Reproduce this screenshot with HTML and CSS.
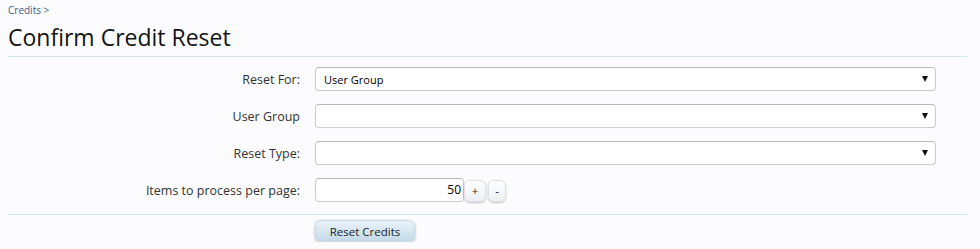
FILE: index.html
```html
<!DOCTYPE html>
<html>
<head>
<meta charset="utf-8">
<link rel="stylesheet" href="styles.css">
</head>
<body>
<div class="page">
  <div class="breadcrumb"><a href="#">Credits</a> &gt;</div>
  <h1 class="title">Confirm Credit Reset</h1>
  <form class="form">
    <div class="row">
      <label class="label">Reset For:</label>
      <div class="ctrl">
        <div class="select"><span class="val">User Group</span><span class="arrow"></span></div>
      </div>
    </div>
    <div class="row">
      <label class="label">User Group</label>
      <div class="ctrl">
        <div class="select"><span class="val"></span><span class="arrow"></span></div>
      </div>
    </div>
    <div class="row">
      <label class="label">Reset Type:</label>
      <div class="ctrl">
        <div class="select"><span class="val"></span><span class="arrow"></span></div>
      </div>
    </div>
    <div class="row">
      <label class="label">Items to process per page:</label>
      <div class="ctrl spin">
        <div class="num">50</div>
        <button type="button" class="spinbtn">+</button>
        <button type="button" class="spinbtn">-</button>
      </div>
    </div>
    <div class="submit">
      <div class="label"></div>
      <div class="ctrl"><button type="button" class="primary">Reset Credits</button></div>
    </div>
  </form>
</div>
</body>
</html>
```

FILE: styles.css
```css
html, body {
  margin: 0;
  padding: 0;
  background: #fcfcfe;
}
body {
  font-family: "Open Sans", "Noto Sans", sans-serif;
  color: #222;
}
.page {
  padding: 3px 13px 0 8px;
}
.breadcrumb {
  font-size: 10px;
  color: #41607e;
  height: 15px;
  line-height: 15px;
}
.breadcrumb a {
  color: #41607e;
  text-decoration: none;
}
.title {
  margin: 0;
  font-weight: normal;
  font-size: 23px;
  line-height: 30px;
  height: 39px;
  color: #141414;
  border-bottom: 1px solid #d3e6ee;
  box-sizing: border-box;
  padding-top: 4px;
}
.form {
  padding-top: 10px;
}
.row {
  display: flex;
  align-items: center;
  height: 24px;
  margin-bottom: 13px;
}
.label {
  width: 292px;
  flex: none;
  text-align: right;
  font-size: 12.5px;
  color: #333;
  padding-right: 15px;
}
.ctrl {
  flex: 1;
  padding-right: 31px;
  display: flex;
}
.select {
  flex: 1;
  height: 24px;
  box-sizing: border-box;
  border: 1px solid #cbcbcb;
  border-top-color: #b8b8b8;
  border-radius: 4px;
  background: #fff;
  display: flex;
  align-items: center;
  padding: 0 7px 0 8px;
  font-size: 11px;
  color: #000;
}
.val {
  flex: 1;
}
.arrow {
  width: 0;
  height: 0;
  border-left: 3.5px solid transparent;
  border-right: 3.5px solid transparent;
  border-top: 6px solid #111;
}
.spin {
  align-items: center;
}
.num {
  width: 149px;
  height: 24px;
  box-sizing: border-box;
  border: 1px solid #cbcbcb;
  border-top-color: #b8b8b8;
  border-radius: 4px;
  background: #fff;
  text-align: right;
  font-size: 12px;
  line-height: 22px;
  padding-right: 2px;
  color: #000;
}
.spinbtn {
  height: 22px;
  min-width: 22px;
  margin-left: 0;
  border: 1px solid #e0e0e6;
  border-radius: 6px;
  background: linear-gradient(#fff, #eceff3);
  box-shadow: 0 1px 2px rgba(0,0,0,0.25);
  font-family: inherit;
  font-size: 11.5px;
  color: #222;
  padding: 0 5px;
  margin-top: 1px;
}
.spinbtn + .spinbtn {
  margin-left: 2px;
  min-width: 18px;
}
.submit {
  display: flex;
  border-top: 1px solid #d3e6ee;
  padding-top: 5px;
  margin-top: -1px;
}
.primary {
  width: 100px;
  height: 22px;
  border: 1px solid #c9d9e6;
  border-radius: 6px;
  background: linear-gradient(#eaf3f9, #c3d9e8);
  box-shadow: 0 1px 3px rgba(0,0,0,0.3);
  font-family: inherit;
  font-size: 11.5px;
  color: #222;
  padding: 0;
}
```
